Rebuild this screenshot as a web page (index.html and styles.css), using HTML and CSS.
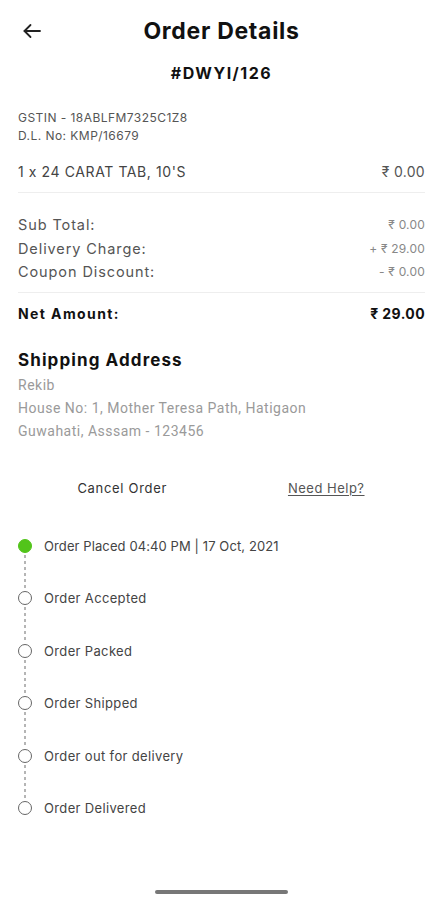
FILE: index.html
```html
<!DOCTYPE html>
<html lang="en">
<head>
<meta charset="utf-8">
<title>Order Details</title>
<link rel="stylesheet" href="styles.css">
</head>
<body>
<div class="page">
  <header class="header">
    <button class="back" aria-label="Back">
      <svg width="20" height="16" viewBox="0 0 20 16" fill="none" stroke="#222" stroke-width="1.8" stroke-linecap="round" stroke-linejoin="round"><path d="M18 8H2.5"/><path d="M8.5 2L2.5 8l6 6"/></svg>
    </button>
    <h1 class="title">Order Details</h1>
    <span></span>
  </header>
  <div class="order-no">#DWYI/126</div>

  <div class="meta">
    <div>GSTIN - 18ABLFM7325C1Z8</div>
    <div>D.L. No: KMP/16679</div>
  </div>

  <div class="item-row">
    <span>1 x 24 CARAT TAB, 10'S</span>
    <span class="item-price">₹ 0.00</span>
  </div>

  <div class="summary">
    <div class="sum-row"><span>Sub Total:</span><span class="sum-val">₹ 0.00</span></div>
    <div class="sum-row"><span>Delivery Charge:</span><span class="sum-val">+ ₹ 29.00</span></div>
    <div class="sum-row"><span>Coupon Discount:</span><span class="sum-val">- ₹ 0.00</span></div>
  </div>

  <div class="net-row"><span>Net Amount:</span><span class="net-val">₹ 29.00</span></div>

  <h2 class="ship-title">Shipping Address</h2>
  <div class="address">
    <div>Rekib</div>
    <div>House No: 1, Mother Teresa Path, Hatigaon</div>
    <div>Guwahati, Asssam - 123456</div>
  </div>

  <div class="actions">
    <span class="cancel">Cancel Order</span>
    <span class="help">Need Help?</span>
  </div>

  <ul class="timeline">
    <li class="step done"><div class="marker"><span class="dot"></span><span class="line"></span></div><span class="label tight">Order Placed 04:40 PM | 17 Oct, 2021</span></li>
    <li class="step"><div class="marker"><span class="dot"></span><span class="line"></span></div><span class="label">Order Accepted</span></li>
    <li class="step"><div class="marker"><span class="dot"></span><span class="line"></span></div><span class="label">Order Packed</span></li>
    <li class="step"><div class="marker"><span class="dot"></span><span class="line"></span></div><span class="label">Order Shipped</span></li>
    <li class="step"><div class="marker"><span class="dot"></span><span class="line"></span></div><span class="label">Order out for delivery</span></li>
    <li class="step last"><div class="marker"><span class="dot"></span></div><span class="label">Order Delivered</span></li>
  </ul>

  <div class="home-bar"></div>
</div>
</body>
</html>
```
FILE: styles.css
```css
* { box-sizing: border-box; }
html, body { margin: 0; padding: 0; background: #fff; }
body {
  font-family: Inter, "Noto Sans", "DejaVu Sans", sans-serif;
  color: #222;
  font-feature-settings: "calt" 0;
}

.page {
  width: 443px;
  height: 900px;
  padding: 18px 18px 0;
  display: flex;
  flex-direction: column;
}

.header {
  display: grid;
  grid-template-columns: 40px 1fr 40px;
  align-items: center;
  height: 26px;
}
.back {
  border: 0; background: none; padding: 0; margin: 0 0 0 4px;
  display: flex; align-items: center; height: 26px;
}
.title {
  margin: 0;
  text-align: center;
  font-size: 23px;
  line-height: 26px;
  font-weight: 700;
  color: #111;
  letter-spacing: 0.7px;
}
.order-no {
  margin-top: 19px;
  text-align: center;
  font-size: 16px;
  line-height: 20px;
  font-weight: 700;
  color: #111;
  letter-spacing: 1.5px;
}

.meta {
  margin-top: 26px;
  font-size: 12px;
  line-height: 18px;
  color: #555;
  letter-spacing: 0.45px;
}

.item-row {
  margin-top: 17px;
  display: flex;
  justify-content: space-between;
  font-size: 14px;
  line-height: 20px;
  color: #444;
  letter-spacing: 0.6px;
  padding-bottom: 10px;
  border-bottom: 1px solid #eee;
}
.item-price { color: #555; letter-spacing: 0.3px; }

.summary {
  padding-top: 20px;
  padding-bottom: 8px;
  border-bottom: 1px solid #eee;
}
.sum-row {
  display: flex;
  justify-content: space-between;
  font-size: 14.5px;
  line-height: 23.5px;
  color: #555;
  letter-spacing: 0.9px;
}
.sum-val { font-size: 12px; color: #888; letter-spacing: 0.2px; }

.net-row {
  margin-top: 10px;
  display: flex;
  justify-content: space-between;
  font-size: 14px;
  line-height: 22px;
  font-weight: 700;
  color: #111;
  letter-spacing: 1.4px;
}
.net-val { letter-spacing: 0.4px; }

.ship-title {
  margin: 23px 0 0;
  font-size: 17px;
  line-height: 24px;
  font-weight: 700;
  color: #111;
  letter-spacing: 1.1px;
}
.address {
  margin-top: 2px;
  font-family: Roboto, "Noto Sans", sans-serif;
  font-size: 14px;
  line-height: 23px;
  color: #9a9a9a;
  letter-spacing: 0.5px;
}

.actions {
  margin-top: 35px;
  display: grid;
  grid-template-columns: 1fr 1fr;
  font-size: 13px;
  line-height: 20px;
  text-align: center;
}
.cancel { color: #333; letter-spacing: 0.7px; padding-left: 5px; }
.help { color: #555; text-decoration: underline; text-underline-offset: 2px; letter-spacing: 0.5px; padding-left: 6px; }

.timeline {
  list-style: none;
  margin: 41px 0 0;
  padding: 0;
}
.step {
  display: flex;
  height: 52.6px;
}
.step.last { height: auto; }
.marker {
  width: 14px;
  display: flex;
  flex-direction: column;
  align-items: center;
}
.dot {
  width: 14px;
  height: 14px;
  border-radius: 50%;
  border: 1.8px solid #666;
  background: #fff;
  flex: none;
}
.done .dot { background: #52c41a; border-color: #52c41a; }
.line {
  flex: 1;
  width: 2px;
  margin: 2px 0 1px;
  background: repeating-linear-gradient(to bottom, #b5b5b5 0 3px, transparent 3px 6px);
}
.label {
  margin-left: 12px;
  margin-top: -3px;
  font-size: 13px;
  line-height: 20px;
  color: #444;
  height: 20px;
  letter-spacing: 0.35px;
}
.label.tight { letter-spacing: 0.1px; }

.home-bar {
  margin: auto auto 6px;
  width: 133px;
  height: 4px;
  border-radius: 2px;
  background: #777;
}
```
